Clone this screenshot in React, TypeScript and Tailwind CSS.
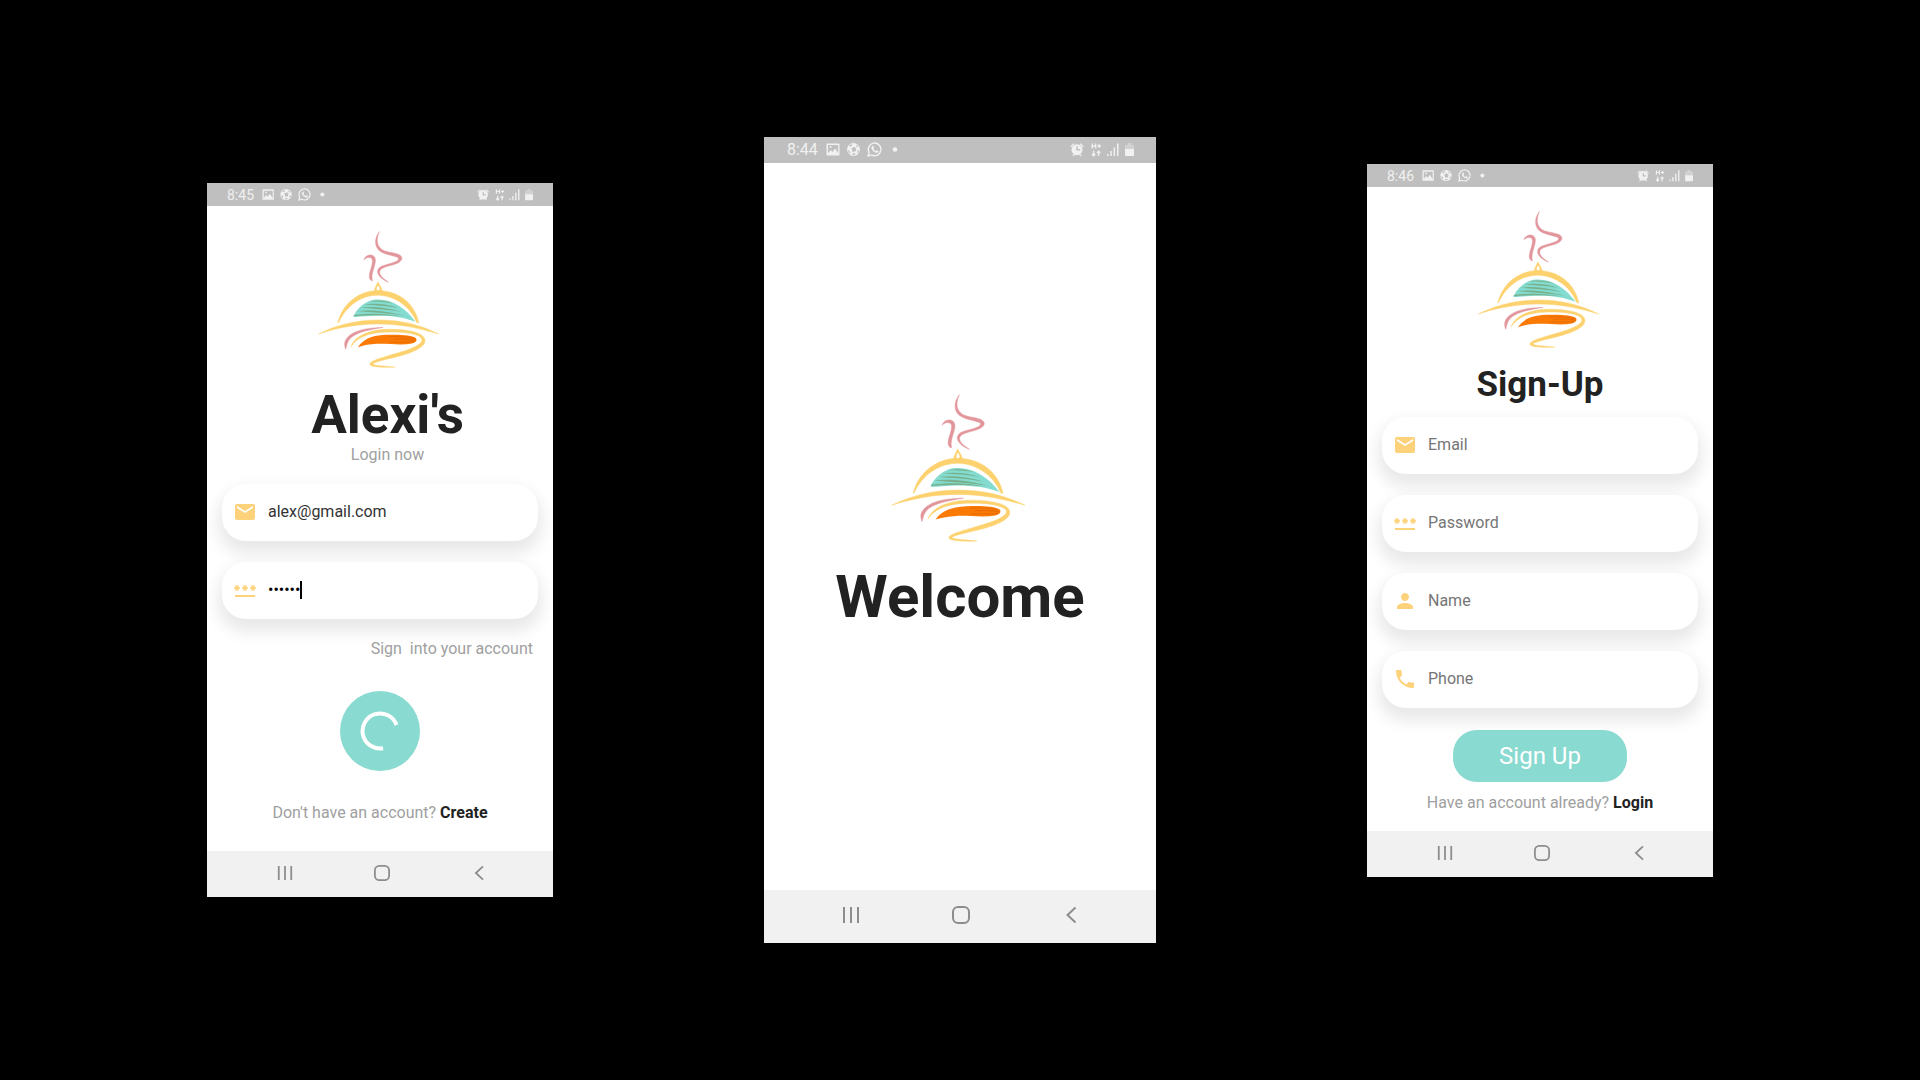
import React from "react";
import { MdEmail, MdPassword, MdPerson, MdPhone } from "react-icons/md";

function Logo({ className }: { className: string }) {
  return (
    <svg viewBox="26 40 428 448" preserveAspectRatio="none" className={className} role="img" aria-label="Alexi's logo">
      <g fill="#e2969b" stroke="#e2969b" strokeWidth="1.5" strokeLinejoin="round">
        <path d="M238 45C220 68 223 92 236 105C252 119 281 121 298 128C303 131 301 137 294 141C276 150 247 152 236 163C224 177 240 198 268 208C248 195 233 182 241 169C250 157 285 155 303 144C315 136 316 126 302 119C284 111 256 112 244 101C228 88 228 68 238 45Z" />
        <path d="M187 136C192 116 224 114 225 137C225 158 209 180 215 204C202 202 203 186 209 168C216 146 219 131 207 129C198 127 193 131 187 136Z" />
        <path d="M250 354C200 355 150 362 130 390C122 400 122 412 127 424C132 412 130 400 146 386C168 368 210 360 250 354Z" />
      </g>
      <g fill="#fdd26e" stroke="#fdd26e" strokeWidth="1.5" strokeLinejoin="round">
        <path fillRule="evenodd" d="M233 207C229 218 221 226 221 240L247 240C247 226 238 218 233 207ZM234 217C238 224 241 228 239 233C236 237 231 237 229 233C227 228 230 224 234 217Z" />
        <path d="M101 340C115 278 170 236 232 235C304 235 356 280 368 340L361 338C343 293 295 251 233 250C178 250 128 285 104 338Z" />
        <path d="M37 375C100 345 165 330 235 330C310 330 370 345 433 375C370 357 310 343 235 343C165 343 100 355 37 375Z" />
        <path d="M145 416C155 385 200 360 270 360C330 360 388 370 388 397C388 420 340 438 290 450C255 458 222 466 216 471C220 478 255 478 290 482C255 484 212 482 207 474C204 463 235 455 285 440C335 426 376 412 378 395C378 378 335 369 275 369C205 369 165 385 145 416Z" />
      </g>
      <path fill="#83dccf" d="M152 320C162 295 190 268 225 264C275 260 325 290 357 336C325 322 280 316 235 316C200 316 175 320 152 320Z" />
      <g fill="#78b08d">
        <path d="M203 270C235 265 260 268 284 277C258 272 232 271 203 270Z" />
        <path d="M186 280C225 275 265 279 300 291C262 284 225 283 186 280Z" />
        <path d="M174 290C215 286 262 289 312 305C260 295 215 294 174 290Z" />
        <path d="M163 301C205 297 262 300 322 317C262 306 205 306 163 301Z" />
        <path d="M154 314C200 307 262 308 310 319C262 314 200 314 154 318Z" />
      </g>
      <path fill="#fb7a05" d="M168 418C180 398 205 380 260 378C300 376 345 378 358 388C364 396 358 402 345 406C310 412 270 406 230 407C205 408 185 412 168 418Z" />
      <g fill="none" stroke="#d96200" strokeWidth="2" strokeLinecap="round">
        <path d="M270 384C300 382 330 384 352 389" />
        <path d="M285 392C310 390 335 391 357 395" />
        <path d="M275 401C305 402 330 402 352 400" />
      </g>
    </svg>
  );
}

function StatusIcons() {
  return (
    <svg viewBox="0 0 72 16" className="h-full" fill="#f1f1f1" aria-hidden="true">
      <path fillRule="evenodd" d="M1.500 1.500h11a1 1 0 0 1 1 1v10a1 1 0 0 1-1 1h-11a1 1 0 0 1-1-1v-10a1 1 0 0 1 1-1ZM2 3v8.300l2.700-3.300 1.800 2 2.500-3.500 3.200 4.800V3ZM4.600 4a1 1 0 1 1 0 2 1 1 0 0 1 0-2Z" />
      <circle cx="27.500" cy="7.500" r="6.500" />
      <g fill="#bfbfbf">
        <path d="M25.600 6.200l2.600-1.400 2.200 1.900-1 2.900-3 .2Z" />
        <path d="M23.200 3.600l2.600-1.500.2 1.500-1.700 1.500ZM21.900 8l1.800.9.500 2-1 .9ZM26.200 11.600l2.700-.3.500 1.300-2.400.7ZM31.400 9l1.700-1-.3 2.400-1.200 1.100ZM30.200 2.700l2 1.800-.2 1-1.900-1.200Z" />
      </g>
      <path fill="none" stroke="#f1f1f1" strokeWidth="1.400" d="M42 14l1.100-3.600a6.300 6.300 0 1 1 2.500 2.500Z" strokeLinejoin="round" />
      <path d="M46.300 4.300c.5-.4 1-.3 1.200.2l.5 1.200c.1.300-.4.800-.6 1.100.5 1.100 1.300 1.800 2.500 2.300.4-.4.700-1 1.100-.9l1.300.7c.4.3.1 1.200-.4 1.600-1.600 1.200-6-1.300-6.400-4.300-.1-.8.300-1.500.8-1.900Z" />
      <circle cx="69" cy="7.500" r="2.300" />
    </svg>
  );
}

function SystemIcons() {
  return (
    <svg viewBox="0 0 64 16" className="h-full" fill="#f1f1f1" aria-hidden="true">
      <path fillRule="evenodd" d="M7 2.200a5.500 5.500 0 1 1 0 11 5.500 5.500 0 0 1 0-11ZM6.400 4.300v4.200h3.900V7.100H7.800V4.300Z" />
      <path d="M.3 4.300L3.600 1.300l.8.900L1.100 5.200ZM13.700 4.300l-3.300-3-.8.900 3.300 3ZM2.200 14l1.800-2.500 1.100.8L3.800 14ZM11.800 14L10 11.500l-1.100.8 1.300 1.700Z" />
      <g fill="none" stroke="#f1f1f1" strokeWidth="1.300">
        <path d="M22.200 1.500v5M25.700 1.500v5M22.200 4h3.500M27.500 4h3.400M29.200 2.300v3.400" />
        <path d="M23.600 8.800v5M21.900 12l1.700 1.800 1.700-1.800M28.600 14V9.200M26.900 11l1.700-1.800 1.700 1.800" />
      </g>
      <path d="M37 12h1.500v2H37ZM40.300 9h1.500v5h-1.500ZM43.600 5.500h1.500V14h-1.500ZM47 1.500h1.500V14H47Z" />
      <path opacity=".4" d="M57.500 1h4v2H64v4.500h-9V3h2.500Z" />
      <path d="M55 7h9v6a1 1 0 0 1-1 1h-7a1 1 0 0 1-1-1Z" />
    </svg>
  );
}

function StatusBar({ time, large = false }: { time: string; large?: boolean }) {
  return (
    <header
      className={
        large
          ? "flex h-[26px] items-center justify-between bg-[#bfbfbf] pr-[22px] pl-[23px] text-base text-[#f1f1f1]"
          : "flex h-[23px] items-center justify-between bg-[#bfbfbf] px-5 text-sm text-[#f1f1f1]"
      }
    >
      <div className={large ? "flex h-4 items-center gap-2" : "flex h-3.5 items-center gap-2"}>
        <span>{time}</span>
        <StatusIcons />
      </div>
      <div className={large ? "h-4" : "h-3.5"}>
        <SystemIcons />
      </div>
    </header>
  );
}

function NavBar({ large = false }: { large?: boolean }) {
  const icon = large ? "size-[18px]" : "size-4";
  const stroke = { fill: "none", stroke: "#8d8d8d", strokeWidth: 2 };
  return (
    <nav
      aria-label="System"
      className={
        large
          ? "grid h-[53px] grid-cols-3 bg-[#f1f1f1] pr-[30px] pb-1 pl-8"
          : "grid h-[46px] grid-cols-3 bg-[#f1f1f1] pr-[26px] pb-0.5 pl-[29px]"
      }
    >
      <button aria-label="Recent apps" className="flex items-center justify-center">
        <svg viewBox="0 0 18 18" className={icon} {...stroke}>
          <path d="M2 1v16M9 1v16M16 1v16" />
        </svg>
      </button>
      <button aria-label="Home" className="flex items-center justify-center">
        <svg viewBox="0 0 18 18" className={icon} {...stroke}>
          <rect x="1" y="1" width="16" height="16" rx="5" />
        </svg>
      </button>
      <button aria-label="Back" className="flex items-center justify-center">
        <svg viewBox="0 0 18 18" className={icon} {...stroke}>
          <path d="M13.500 1.500L5.500 9l8 7.500" />
        </svg>
      </button>
    </nav>
  );
}

function Field({
  icon,
  label,
  children,
}: {
  icon: React.ReactNode;
  label: string;
  children: React.ReactNode;
}) {
  return (
    <label
      aria-label={label}
      className="flex h-[57px] items-center rounded-[24px] bg-white pr-4 pb-px pl-[11px] shadow-[0_9px_16px_4px_rgba(0,0,0,0.09)]"
    >
      <span className="mr-[11px] text-2xl text-[#fdd27a]">{icon}</span>
      {children}
    </label>
  );
}

const inputStyle = "min-w-0 flex-1 bg-transparent text-base text-[#333] outline-none placeholder:text-[#757575]";

function LoginScreen() {
  return (
    <section className="flex flex-col bg-white">
      <StatusBar time="8:45" />
      <form className="flex flex-col px-[15px] pt-6 pb-7">
        <Logo className="h-[139px] w-[130px] self-center" />
        <div className="mt-[15px] pl-[15px] text-center">
          <h1 className="text-[53px] leading-[62px] font-bold text-[#222]">Alexi's</h1>
          <p className="text-base leading-[18px] text-[#a0a0a0]">Login now</p>
        </div>
        <div className="mt-5 flex flex-col gap-[21px]">
          <Field icon={<MdEmail />} label="Email">
            <input type="email" defaultValue="alex@gmail.com" className={inputStyle} />
          </Field>
          <Field icon={<MdPassword />} label="Password">
            <input
              type="password"
              defaultValue="secret"
              className="field-sizing-content bg-transparent text-base text-black outline-none"
            />
            <span className="h-[18px] w-0.5 bg-black" />
          </Field>
        </div>
        <p className="mt-5 pr-[5px] text-right text-base leading-5 whitespace-pre text-[#a0a0a0]">
          {"Sign  into your account"}
        </p>
        <button
          type="button"
          aria-label="Signing in"
          className="mt-8 flex size-20 items-center justify-center self-center rounded-full bg-[#89dad0]"
        >
          <svg viewBox="0 0 40 40" className="size-10" fill="none" stroke="#fff" strokeWidth="4">
            <path d="M23 37.200A17.500 17.500 0 1 1 36.500 14" />
          </svg>
        </button>
        <p className="mt-8 text-center text-base leading-5 text-[#a0a0a0]">
          Don't have an account?{" "}
          <a href="#create" className="font-bold text-[#222]">
            Create
          </a>
        </p>
      </form>
      <NavBar />
    </section>
  );
}

function WelcomeScreen() {
  return (
    <section className="flex min-h-[806px] flex-col bg-white">
      <StatusBar time="8:44" large />
      <div className="flex flex-1 flex-col items-center justify-center pb-7">
        <Logo className="h-[150px] w-36" />
        <h1 className="mt-[19px] text-[60px] leading-[70px] font-bold text-[#222]">Welcome</h1>
      </div>
      <NavBar large />
    </section>
  );
}

function SignUpScreen() {
  return (
    <section className="mb-[39px] flex flex-col bg-white">
      <StatusBar time="8:46" />
      <form className="flex flex-col px-[15px] pt-[23px] pb-[18px]">
        <Logo className="h-[139px] w-[130px] self-center" />
        <h1 className="mt-[15px] text-center text-[35px] leading-[42px] font-bold text-[#222]">Sign-Up</h1>
        <div className="mt-[11px] flex flex-col gap-[21px]">
          <Field icon={<MdEmail />} label="Email">
            <input type="email" placeholder="Email" className={inputStyle} />
          </Field>
          <Field icon={<MdPassword />} label="Password">
            <input type="password" placeholder="Password" className={inputStyle} />
          </Field>
          <Field icon={<MdPerson />} label="Name">
            <input type="text" placeholder="Name" className={inputStyle} />
          </Field>
          <Field icon={<MdPhone />} label="Phone">
            <input type="tel" placeholder="Phone" className={inputStyle} />
          </Field>
        </div>
        <button
          type="button"
          className="z-10 mt-[22px] h-[52px] w-[174px] self-center rounded-[24px] bg-[#89dad0] text-2xl text-white"
        >
          Sign Up
        </button>
        <p className="mt-[11px] text-center text-base leading-5 text-[#a0a0a0]">
          Have an account already?{" "}
          <a href="#login" className="font-bold text-[#222]">
            Login
          </a>
        </p>
      </form>
      <NavBar />
    </section>
  );
}

export default function App() {
  return (
    <main className="grid min-h-screen grid-cols-[346fr_392fr_346fr] items-center gap-x-[211px] bg-black px-[207px] font-['Roboto',sans-serif]">
      <LoginScreen />
      <WelcomeScreen />
      <SignUpScreen />
    </main>
  );
}
